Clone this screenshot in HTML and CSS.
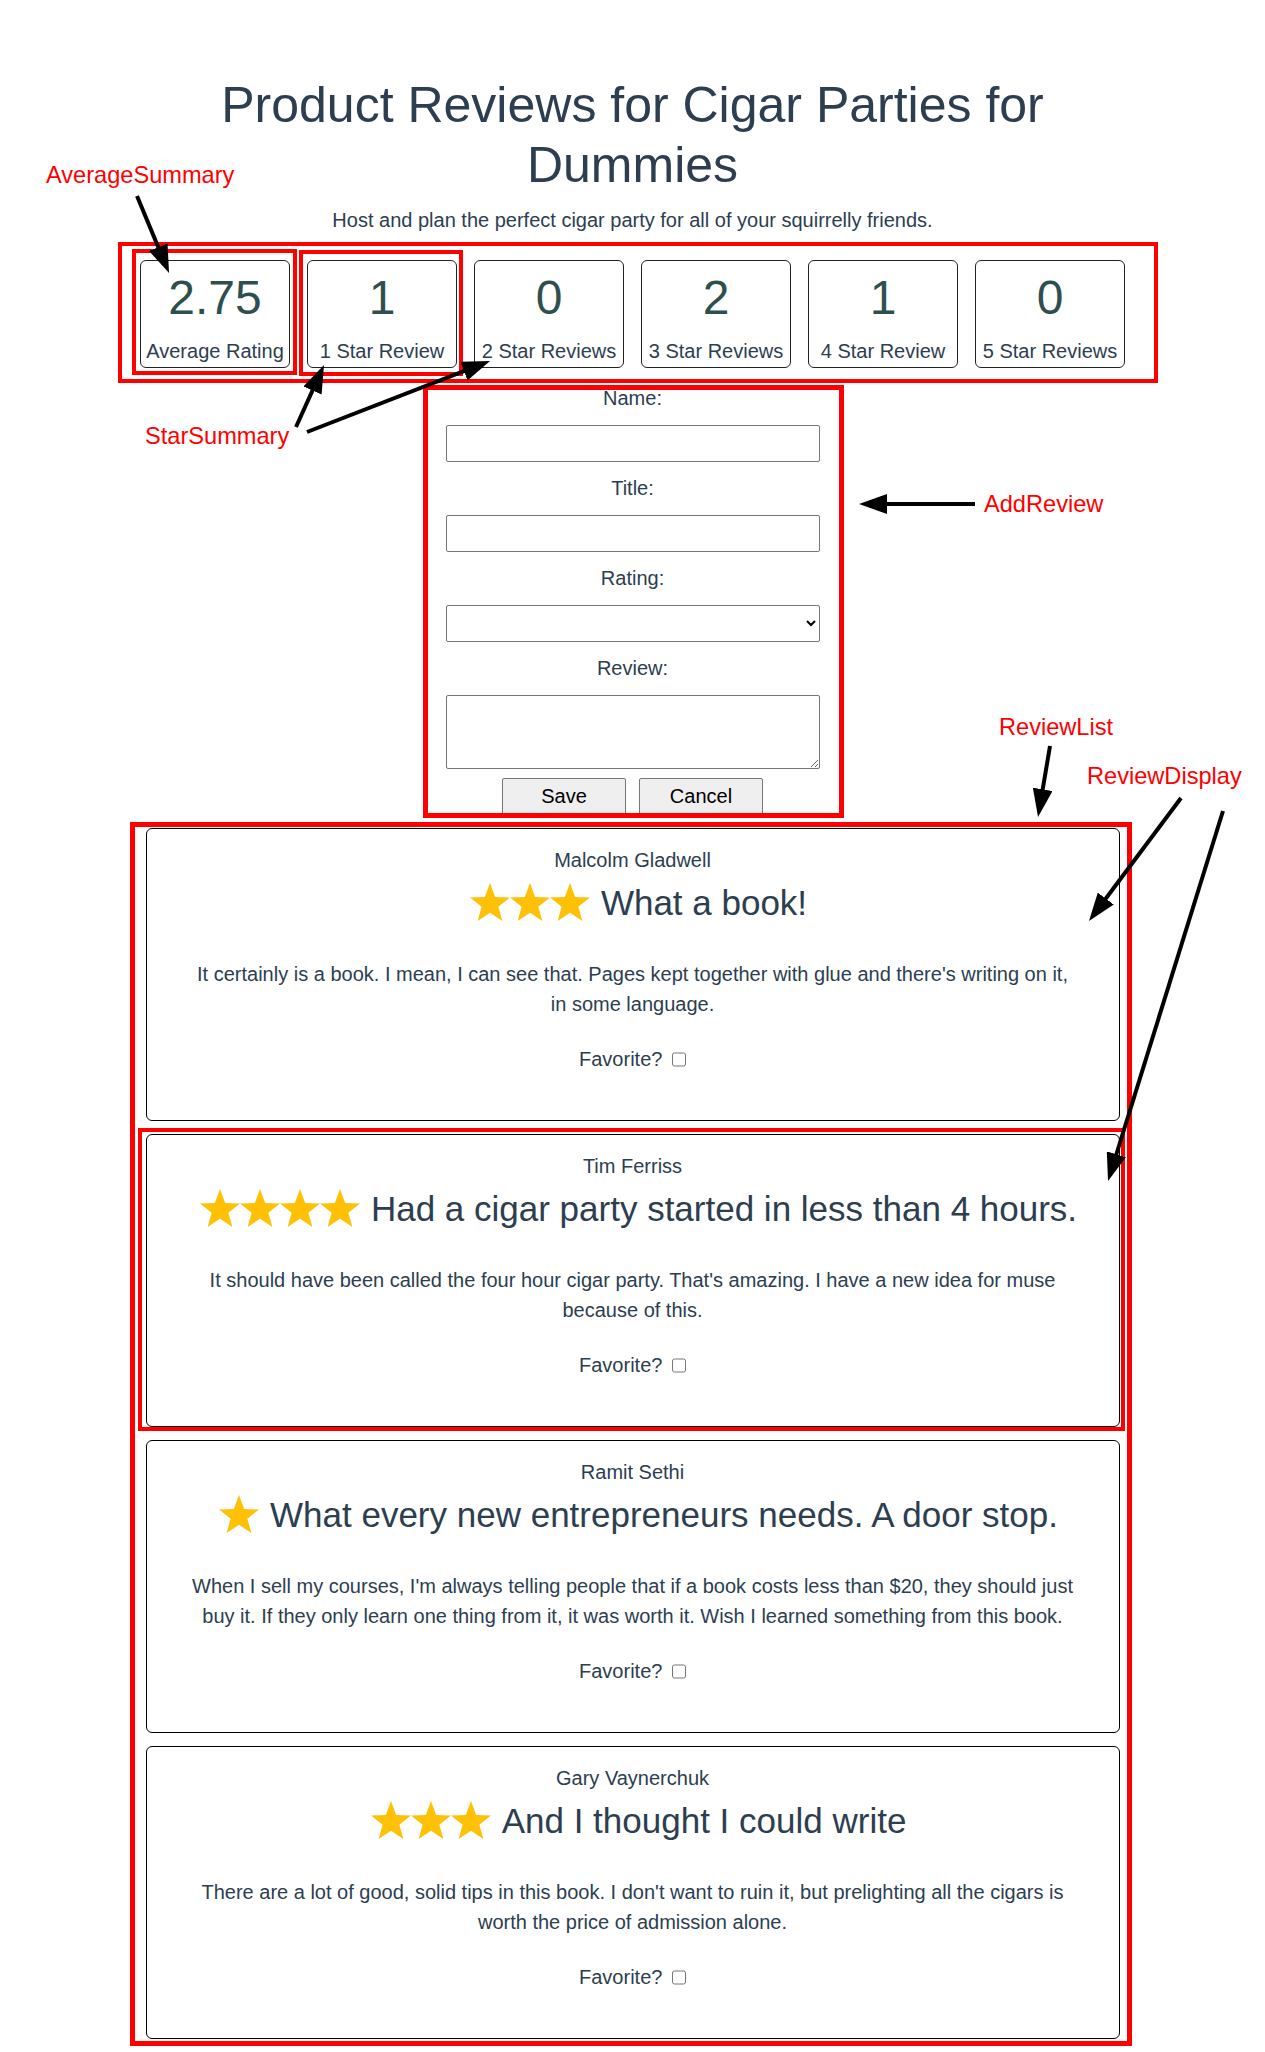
FILE: index.html
```html
<!DOCTYPE html>
<html lang="en">
<head>
<meta charset="utf-8">
<title>Product Reviews</title>
<link rel="stylesheet" href="styles.css">
</head>
<body>
<svg class="defs" width="0" height="0" aria-hidden="true">
  <defs>
    <symbol id="star" viewBox="0 0 40 40">
      <polygon points="20,0 25.17,13.88 39.97,14.51 28.37,23.72 32.34,37.99 20,29.8 7.66,37.99 11.63,23.72 0.03,14.51 14.83,13.88" fill="#ffc107"/>
    </symbol>
  </defs>
</svg>
<div class="page">
  <div id="app" class="app">
    <h1 class="title">Product Reviews for Cigar Parties for Dummies</h1>
    <p class="subtitle">Host and plan the perfect cigar party for all of your squirrelly friends.</p>

    <div class="stats">
      <div class="stat"><div class="stat-num">2.75</div><div class="stat-label">Average Rating</div></div>
      <div class="stat"><div class="stat-num">1</div><div class="stat-label">1 Star Review</div></div>
      <div class="stat"><div class="stat-num">0</div><div class="stat-label">2 Star Reviews</div></div>
      <div class="stat"><div class="stat-num">2</div><div class="stat-label">3 Star Reviews</div></div>
      <div class="stat"><div class="stat-num">1</div><div class="stat-label">4 Star Review</div></div>
      <div class="stat"><div class="stat-num">0</div><div class="stat-label">5 Star Reviews</div></div>
    </div>

    <form class="add-review">
      <label class="field-label" for="reviewer">Name:</label>
      <input class="field" id="reviewer" type="text">
      <label class="field-label" for="title">Title:</label>
      <input class="field" id="title" type="text">
      <label class="field-label" for="rating">Rating:</label>
      <select class="field" id="rating">
        <option value=""></option>
        <option>1 Star</option>
        <option>2 Stars</option>
        <option>3 Stars</option>
        <option>4 Stars</option>
        <option>5 Stars</option>
      </select>
      <label class="field-label" for="review">Review:</label>
      <textarea class="field field-area" id="review"></textarea>
      <div class="actions">
        <button type="button" class="btn">Save</button>
        <button type="button" class="btn">Cancel</button>
      </div>
    </form>

    <div class="review-list">
      <div class="review">
        <p class="author">Malcolm Gladwell</p>
        <div class="review-title">
          <span class="stars">
            <svg class="star"><use href="#star"/></svg><svg class="star"><use href="#star"/></svg><svg class="star"><use href="#star"/></svg>
          </span>
          <span>What a book!</span>
        </div>
        <p class="review-body">It certainly is a book. I mean, I can see that. Pages kept together with glue and there's writing on it, in some language.</p>
        <p class="favorite">Favorite? <input type="checkbox" class="fav-box"></p>
      </div>

      <div class="review">
        <p class="author">Tim Ferriss</p>
        <div class="review-title">
          <span class="stars">
            <svg class="star"><use href="#star"/></svg><svg class="star"><use href="#star"/></svg><svg class="star"><use href="#star"/></svg><svg class="star"><use href="#star"/></svg>
          </span>
          <span>Had a cigar party started in less than 4 hours.</span>
        </div>
        <p class="review-body">It should have been called the four hour cigar party. That's amazing. I have a new idea for muse because of this.</p>
        <p class="favorite">Favorite? <input type="checkbox" class="fav-box"></p>
      </div>

      <div class="review">
        <p class="author">Ramit Sethi</p>
        <div class="review-title">
          <span class="stars">
            <svg class="star"><use href="#star"/></svg>
          </span>
          <span>What every new entrepreneurs needs. A door stop.</span>
        </div>
        <p class="review-body">When I sell my courses, I'm always telling people that if a book costs less than $20, they should just buy it. If they only learn one thing from it, it was worth it. Wish I learned something from this book.</p>
        <p class="favorite">Favorite? <input type="checkbox" class="fav-box"></p>
      </div>

      <div class="review">
        <p class="author">Gary Vaynerchuk</p>
        <div class="review-title">
          <span class="stars">
            <svg class="star"><use href="#star"/></svg><svg class="star"><use href="#star"/></svg><svg class="star"><use href="#star"/></svg>
          </span>
          <span>And I thought I could write</span>
        </div>
        <p class="review-body">There are a lot of good, solid tips in this book. I don't want to ruin it, but prelighting all the cigars is worth the price of admission alone.</p>
        <p class="favorite">Favorite? <input type="checkbox" class="fav-box"></p>
      </div>
    </div>
  </div>

  <div class="annotations" aria-hidden="true">
    <div class="box box-stats"></div>
    <div class="box box-average"></div>
    <div class="box box-star"></div>
    <div class="box box-add"></div>
    <div class="box box-list"></div>
    <div class="box box-display"></div>

    <span class="note note-average">AverageSummary</span>
    <span class="note note-star">StarSummary</span>
    <span class="note note-add">AddReview</span>
    <span class="note note-list">ReviewList</span>
    <span class="note note-display">ReviewDisplay</span>

    <svg class="arrows" width="1265" height="2052" viewBox="0 0 1265 2052">
      <defs>
        <marker id="head" markerWidth="28" markerHeight="20" refX="18" refY="10" orient="auto" markerUnits="userSpaceOnUse">
          <path d="M0,0 L28,10 L0,20 Z" fill="#000"/>
        </marker>
      </defs>
      <g stroke="#000" stroke-width="4" fill="none" marker-end="url(#head)">
        <line x1="137" y1="196" x2="165.2" y2="263.8"/>
        <line x1="296" y1="427" x2="319.9" y2="374.1"/>
        <line x1="307" y1="432" x2="480.7" y2="364.6"/>
        <line x1="975" y1="504" x2="869" y2="504"/>
        <line x1="1050" y1="746" x2="1039.7" y2="807.1"/>
        <line x1="1181" y1="798" x2="1095" y2="913"/>
        <line x1="1223" y1="811" x2="1111" y2="1171.5"/>
      </g>
    </svg>
  </div>
</div>
</body>
</html>
```

FILE: styles.css
```css
* {
  box-sizing: border-box;
}

html,
body {
  margin: 0;
  padding: 0;
  background: #ffffff;
  overflow: hidden;
}

body {
  font-family: "Liberation Sans", Arial, Helvetica, sans-serif;
  color: #2c3e50;
}

.defs {
  position: absolute;
  width: 0;
  height: 0;
}

.page {
  position: relative;
  width: 1265px;
  height: 2052px;
}

.app {
  width: 1000px;
  margin: 0 auto;
  padding-top: 75px;
  text-align: center;
}

.title {
  margin: 0;
  font-size: 50px;
  font-weight: normal;
  line-height: 60px;
}

.subtitle {
  margin: 14px 0 0;
  font-size: 20px;
  line-height: 23px;
}

/* summary row */
.stats {
  display: flex;
  justify-content: center;
  gap: 17px;
  margin-top: 28px;
}

.stat {
  width: 150px;
  height: 108px;
  border: 1px solid #222;
  border-radius: 6px;
  padding-top: 9px;
  display: flex;
  flex-direction: column;
  align-items: center;
}

.stat-num {
  font-size: 48px;
  line-height: 55px;
  color: #2f4f4f;
}

.stat-label {
  margin-top: 15px;
  font-size: 20px;
  line-height: 23px;
  white-space: nowrap;
}

/* add review form */
.add-review {
  width: 374px;
  margin: 19px auto 0;
  display: flex;
  flex-direction: column;
}

.field-label {
  display: block;
  font-size: 20px;
  line-height: 23px;
}

.field {
  display: block;
  width: 374px;
  height: 37px;
  margin: 15px 0;
  border: 1px solid #767676;
  border-radius: 2px;
  background: #fff;
  font-family: "Liberation Sans", Arial, sans-serif;
  font-size: 18px;
}

.field-area {
  height: 74px;
  margin-bottom: 9px;
}

.actions {
  display: flex;
  justify-content: center;
  gap: 13px;
}

.btn {
  width: 124px;
  height: 37px;
  padding: 0;
  border: 1px solid #767676;
  border-radius: 2px;
  background: #efefef;
  color: #000;
  font-family: "Liberation Sans", Arial, sans-serif;
  font-size: 20px;
}

/* review list */
.review-list {
  width: 974px;
  margin: 13px auto 0;
  display: flex;
  flex-direction: column;
  gap: 13px;
}

.review {
  height: 293px;
  border: 1px solid #000;
  border-radius: 6px;
  padding: 20px 0 46px;
}

.author {
  margin: 0;
  font-size: 20px;
  line-height: 23px;
}

.review-title {
  margin-top: 11px;
  padding-left: 12px;
  height: 40px;
  display: flex;
  justify-content: center;
  align-items: center;
  gap: 11px;
  font-size: 35px;
  line-height: 40px;
  white-space: nowrap;
}

.stars {
  display: flex;
}

.star {
  width: 40px;
  height: 40px;
  display: block;
}

.review-body {
  width: 887px;
  margin: 36px auto 0;
  font-size: 20px;
  line-height: 30px;
}

.favorite {
  margin: 25px 0 0;
  font-size: 20px;
  line-height: 30px;
}

.fav-box {
  width: 14px;
  height: 15px;
  margin: 0 0 0 4px;
  vertical-align: -1px;
}

/* annotation overlay */
.annotations {
  position: absolute;
  top: 0;
  left: 0;
  width: 1265px;
  height: 2052px;
  pointer-events: none;
}

.box {
  position: absolute;
  border: 4px solid #ff0000;
}

.box-stats {
  left: 118px;
  top: 242px;
  width: 1040px;
  height: 141px;
}

.box-average {
  left: 132px;
  top: 249px;
  width: 165px;
  height: 126px;
}

.box-star {
  left: 299px;
  top: 250px;
  width: 164px;
  height: 126px;
}

.box-add {
  left: 423px;
  top: 385px;
  width: 421px;
  height: 433px;
  border-width: 5px;
}

.box-list {
  left: 130px;
  top: 822px;
  width: 1002px;
  height: 1224px;
  border-width: 5px;
}

.box-display {
  left: 138px;
  top: 1128px;
  width: 987px;
  height: 303px;
}

.note {
  position: absolute;
  color: #ff0000;
  font-family: "Liberation Sans", Arial, sans-serif;
  font-size: 23.6px;
  line-height: 23px;
  white-space: nowrap;
}

.note-average {
  left: 46px;
  top: 164px;
}

.note-star {
  left: 145px;
  top: 425px;
}

.note-add {
  left: 984px;
  top: 493px;
}

.note-list {
  left: 999px;
  top: 716px;
}

.note-display {
  left: 1087px;
  top: 765px;
}

.arrows {
  position: absolute;
  top: 0;
  left: 0;
}
```
